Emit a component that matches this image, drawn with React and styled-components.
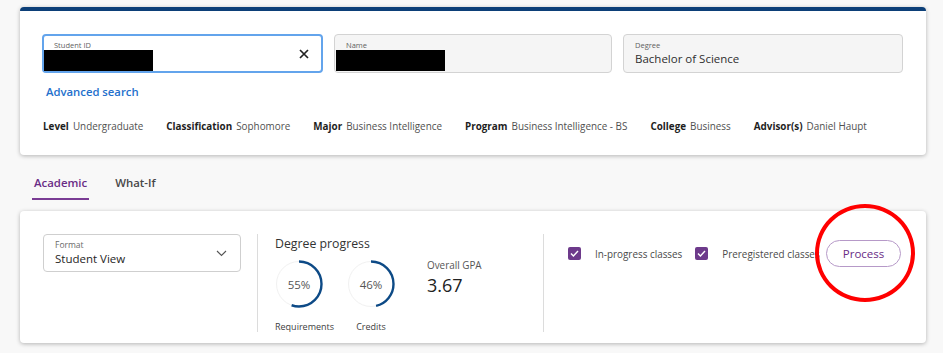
import styled, { createGlobalStyle } from "styled-components";

const GlobalStyle = createGlobalStyle`
  body {
    margin: 0;
    background: #ffffff;
    font-family: "Open Sans", "Liberation Sans", sans-serif;
  }
`;

const Page = styled.div`
  width: 943px;
  height: 353px;
  box-sizing: border-box;
  background: #f8f8f8;
  padding: 7px 17px 0 20px;
`;

const Card = styled.div`
  position: relative;
  background: #ffffff;
  border-radius: 4px;
  box-shadow: 0 1px 4px rgba(0, 0, 0, 0.28);
  ${({ accent }) => accent && `border-top: 4px solid #0c3f78;`}
`;

const SearchCard = styled(Card)`
  padding: 23px 23px 22px 22px;
`;

const FieldRow = styled.div`
  display: grid;
  grid-template-columns: 281px 278px 280px;
  gap: 11px;
`;

const Field = styled.div`
  height: 39px;
  box-sizing: border-box;
  border-radius: 4px;
  border: ${({ focused }) => (focused ? "2px solid #63a4ec" : "1px solid #d3d3d3")};
  background: ${({ disabled }) => (disabled ? "#f5f5f5" : "#ffffff")};
  padding: ${({ focused }) => (focused ? "4px 10px 0" : "5px 11px 0")};
  display: flex;
  align-items: center;
  gap: 8px;
`;

const FieldBody = styled.div`
  flex: 1;
  display: flex;
  flex-direction: column;
  align-self: flex-start;
`;

const FieldLabel = styled.div`
  font-size: 7.5px;
  line-height: 10px;
  color: #5f5f5f;
`;

const FieldValue = styled.div`
  font-size: 11.5px;
  line-height: 18px;
  color: #2f2f2f;
`;

const Redacted = styled.div`
  width: 109px;
  height: 21px;
  background: #000;
  margin-left: ${({ shift }) => shift}px;
`;

const ClearIcon = styled.svg`
  width: 10px;
  height: 10px;
  margin-right: 2px;
  margin-top: -4px;
`;

const AdvancedLink = styled.a`
  display: inline-block;
  margin: 11px 0 0 4px;
  font-size: 11.3px;
  line-height: 16px;
  font-weight: 600;
  color: #2470cc;
  text-decoration: none;
`;

const InfoRow = styled.div`
  display: flex;
  gap: 23px;
  margin: 18px 0 0 1px;
  font-size: 9.9px;
  line-height: 14px;
`;

const InfoItem = styled.div`
  display: flex;
  gap: 4px;
`;

const InfoLabel = styled.span`
  font-weight: 700;
  color: #1e1e1e;
`;

const InfoValue = styled.span`
  color: #505050;
`;

const Tabs = styled.div`
  display: flex;
  gap: 24px;
  margin: 20px 0 11px 12px;
`;

const Tab = styled.div`
  padding: 0 2px 7px;
  font-size: 11.4px;
  line-height: 16px;
  font-weight: 600;
  color: ${({ active }) => (active ? "#6a2c86" : "#474747")};
  border-bottom: 2px solid ${({ active }) => (active ? "#7a3c94" : "transparent")};
`;

const ProgressCard = styled(Card)`
  height: 132px;
  box-sizing: border-box;
  padding: 23px 25px 11px 23px;
  display: flex;
`;

const Select = styled.div`
  flex-shrink: 0;
  width: 198px;
  height: 38px;
  box-sizing: border-box;
  border: 1px solid #cfcfcf;
  border-radius: 4px;
  padding: 5px 13px 0 11px;
  display: flex;
  align-items: center;
`;

const SelectBody = styled.div`
  flex: 1;
  align-self: flex-start;
`;

const SelectLabel = styled.div`
  font-size: 8.5px;
  line-height: 10px;
  color: #6a6a6a;
`;

const SelectValue = styled.div`
  font-size: 11.5px;
  line-height: 17px;
  color: #262626;
`;

const Chevron = styled.svg`
  width: 11px;
  height: 7px;
  margin-top: -4px;
`;

const Divider = styled.div`
  flex-shrink: 0;
  width: 1px;
  background: #dcdcdc;
  margin-left: ${({ left }) => left}px;
`;

const ProgressSection = styled.div`
  flex-shrink: 0;
  width: 285px;
  box-sizing: border-box;
  padding: 2px 0 0 17px;
`;

const SectionTitle = styled.div`
  font-size: 12.3px;
  line-height: 15px;
  color: #333;
`;

const Stats = styled.div`
  display: flex;
  align-items: flex-start;
  gap: 24px;
  margin-top: 9px;
`;

const RingColumn = styled.div`
  width: 48px;
  display: flex;
  flex-direction: column;
  align-items: ${({ align }) => align || "center"};
`;

const RingBox = styled.div`
  position: relative;
  width: 48px;
  height: 48px;
`;

const RingText = styled.div`
  position: absolute;
  inset: 0;
  display: flex;
  align-items: center;
  justify-content: center;
  font-size: 11.5px;
  color: #555;
`;

const RingLabel = styled.div`
  margin-top: 12px;
  font-size: 9px;
  line-height: 13px;
  color: #404040;
  white-space: nowrap;
`;

const Gpa = styled.div`
  margin: -2px 0 0 8px;
`;

const GpaLabel = styled.div`
  font-size: 9.9px;
  line-height: 14px;
  color: #555;
`;

const GpaValue = styled.div`
  font-size: 18px;
  line-height: 26px;
  color: #222;
`;

const OptionsSection = styled.div`
  flex: 1;
  min-width: 0;
  display: flex;
  align-items: center;
  align-self: flex-start;
  margin-top: 6px;
  padding-left: 24px;
`;

const Check = styled.label`
  display: flex;
  align-items: center;
  gap: 14px;
  margin-right: 13px;
  min-width: 0;
  flex-shrink: ${({ shrink }) => (shrink ? 1 : 0)};
  font-size: 9.9px;
  color: #4a4a4a;
  white-space: nowrap;
`;

const CheckBox = styled.span`
  flex-shrink: 0;
  width: 13px;
  height: 13px;
  border-radius: 2px;
  background: #6d3a8b;
  display: flex;
  align-items: center;
  justify-content: center;
`;

const ProcessButton = styled.button`
  flex-shrink: 0;
  margin-left: auto;
  width: 75px;
  height: 27px;
  border: 1px solid #b699c8;
  border-radius: 14px;
  background: #fff;
  color: #6a2c86;
  font-family: inherit;
  font-size: 11.5px;
`;

const Annotation = styled.div`
  position: absolute;
  left: 795px;
  top: -7px;
  width: 100px;
  height: 98px;
  box-sizing: border-box;
  border: 4px solid #ff0000;
  border-radius: 50%;
  pointer-events: none;
`;

const Ring = ({ value }) => {
  const r = 22.5;
  const c = 2 * Math.PI * r;
  return (
    <RingBox>
      <svg width="48" height="48" viewBox="0 0 48 48">
        <circle cx="24" cy="24" r={r} fill="none" stroke="#f1f1f1" strokeWidth="1" />
        <circle
          cx="24"
          cy="24"
          r={r}
          fill="none"
          stroke="#0d4a86"
          strokeWidth="2.4"
          strokeDasharray={`${(c * value) / 100} ${c}`}
          transform="rotate(-90 24 24)"
        />
      </svg>
      <RingText>{value}%</RingText>
    </RingBox>
  );
};

const info = [
  ["Level", "Undergraduate"],
  ["Classification", "Sophomore"],
  ["Major", "Business Intelligence"],
  ["Program", "Business Intelligence - BS"],
  ["College", "Business"],
  ["Advisor(s)", "Daniel Haupt"],
];

const Tick = () => (
  <svg width="9" height="7" viewBox="0 0 9 7">
    <path d="M1 3.6 L3.4 6 L8 1" fill="none" stroke="#fff" strokeWidth="1.4" />
  </svg>
);

export default function App() {
  return (
    <Page>
      <GlobalStyle />
      <SearchCard accent>
        <FieldRow>
          <Field focused>
            <FieldBody>
              <FieldLabel>Student ID</FieldLabel>
              <Redacted shift={-10} />
            </FieldBody>
            <ClearIcon viewBox="0 0 10 10">
              <path d="M1 1 L9 9 M9 1 L1 9" stroke="#222" strokeWidth="1.7" />
            </ClearIcon>
          </Field>
          <Field disabled>
            <FieldBody>
              <FieldLabel>Name</FieldLabel>
              <Redacted shift={-10} />
            </FieldBody>
          </Field>
          <Field disabled>
            <FieldBody>
              <FieldLabel>Degree</FieldLabel>
              <FieldValue>Bachelor of Science</FieldValue>
            </FieldBody>
          </Field>
        </FieldRow>
        <AdvancedLink href="#">Advanced search</AdvancedLink>
        <InfoRow>
          {info.map(([label, value]) => (
            <InfoItem key={label}>
              <InfoLabel>{label}</InfoLabel>
              <InfoValue>{value}</InfoValue>
            </InfoItem>
          ))}
        </InfoRow>
      </SearchCard>

      <Tabs>
        <Tab active>Academic</Tab>
        <Tab>What-If</Tab>
      </Tabs>

      <ProgressCard>
        <Select>
          <SelectBody>
            <SelectLabel>Format</SelectLabel>
            <SelectValue>Student View</SelectValue>
          </SelectBody>
          <Chevron viewBox="0 0 11 7">
            <path d="M1 1 L5.5 5.5 L10 1" fill="none" stroke="#555" strokeWidth="1.1" />
          </Chevron>
        </Select>
        <Divider left={16} />
        <ProgressSection>
          <SectionTitle>Degree progress</SectionTitle>
          <Stats>
            <RingColumn align="flex-start">
              <Ring value={55} />
              <RingLabel>Requirements</RingLabel>
            </RingColumn>
            <RingColumn>
              <Ring value={46} />
              <RingLabel>Credits</RingLabel>
            </RingColumn>
            <Gpa>
              <GpaLabel>Overall GPA</GpaLabel>
              <GpaValue>3.67</GpaValue>
            </Gpa>
          </Stats>
        </ProgressSection>
        <Divider left={0} />
        <OptionsSection>
          <Check>
            <CheckBox>
              <Tick />
            </CheckBox>
            In-progress classes
          </Check>
          <Check shrink>
            <CheckBox>
              <Tick />
            </CheckBox>
            Preregistered classes
          </Check>
          <ProcessButton>Process</ProcessButton>
        </OptionsSection>
        <Annotation />
      </ProgressCard>
    </Page>
  );
}
